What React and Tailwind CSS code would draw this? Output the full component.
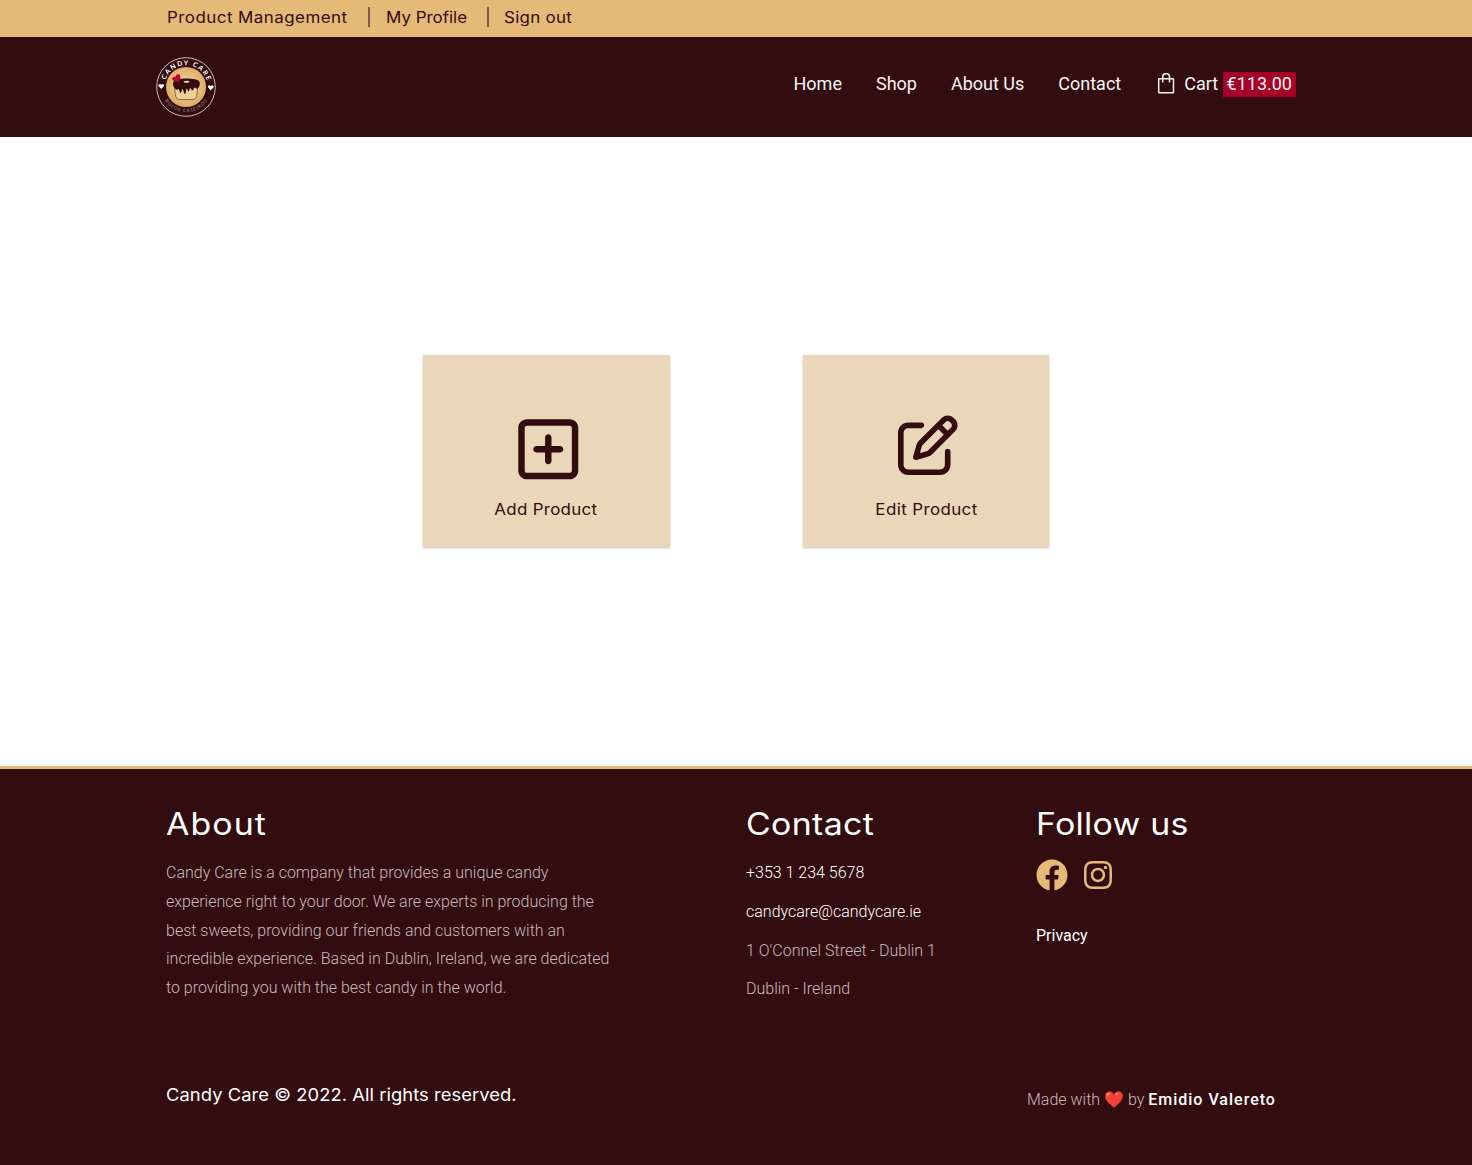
import { FaRegSquarePlus, FaRegPenToSquare } from "react-icons/fa6";
import { FaFacebook, FaInstagram } from "react-icons/fa";

function Logo() {
  return (
    <svg viewBox="0 0 60 60" className="size-[60px] shrink-0" role="img" aria-label="Candy Care">
      <defs>
        <path id="arc-top" d="M8.200 30a21.800 21.800 0 0 1 43.600 0" />
        <path id="arc-bottom" d="M4.800 30a25.200 25.200 0 0 0 50.400 0" />
        <radialGradient id="disc">
          <stop offset="0.3" stopColor="#ecd09a" />
          <stop offset="1" stopColor="#e0ac66" />
        </radialGradient>
      </defs>
      <circle cx="30" cy="30" r="29.300" fill="none" stroke="#c9bcbc" strokeWidth="1" />
      <circle cx="30" cy="30" r="20" fill="url(#disc)" />
      <text fill="#fff" fontSize="6.700" fontWeight="700" letterSpacing="1.400" textAnchor="middle" className="font-['Lato',sans-serif]">
        <textPath href="#arc-top" startOffset="51.500%">CANDY CARE</textPath>
      </text>
      <text fill="#a8938f" fontSize="4.600" letterSpacing="0.9" textAnchor="middle" className="font-['Lato',sans-serif]">
        <textPath href="#arc-bottom" startOffset="50.500%">BOLOS CASEIROS</textPath>
      </text>
      <path d="M5.200 32 2.600 29.300c-1.100-1.900 1.500-3.400 2.600-1.400 1.100-2 3.700-.5 2.600 1.400Z" fill="#fff" />
      <path d="m54.800 33.300-2.600-2.700c-1.100-1.900 1.500-3.400 2.600-1.400 1.100-2 3.700-.5 2.600 1.400Z" fill="#fff" />
      <path d="M18.700 31c.3 7 .8 11.600 5.300 11.600h12.500c4.300 0 4.700-5 5-11.600" fill="#edcf98" stroke="#6d4a35" strokeWidth="0.8" />
      <path d="M17 26c1-3.500 7-4.500 13-4.500s13.500.8 13.800 4c.2 3-.8 5-2 6-1.300 1-2.300-1.500-3.300-1-1 .5-.9 3-2.100 3-1.300 0-1-2.500-2-2.500s-.8 3.500-1.800 3.500-1-3-1.700-3c-.9 0-.8 5.500-2 5.500s-1.500-5-2.500-5c-.8 0-.7 4-1.800 4s-1.200-4-2.200-4-1.500 1.500-2.500.5C18.500 31 16.500 28.500 17 26Z" fill="#330c10" />
      <ellipse cx="30.500" cy="24.800" rx="3" ry="1.100" fill="#edcf98" />
      <path d="M22.800 24.800c-2.500.3-5.500-.6-6.400-2.400-.9-2 1.300-3.400 3.200-2.100-.2-3.300 3.900-4.300 4.600-1 .4 2-.4 4-1.400 5.500Z" fill="#c2002b" />
    </svg>
  );
}

function BagIcon() {
  return (
    <svg viewBox="0 0 18 22" className="relative -top-0.5 -left-px h-[22px] w-[18px]" fill="none" stroke="#f8f3f3" strokeWidth="1.500">
      <rect x="1.700" y="6.700" width="14.800" height="14" rx="0.5" />
      <path d="M5.700 10.500V4.600A3 3 0 0 1 8.700 1.700h.8a3 3 0 0 1 3 2.900v5.900" />
    </svg>
  );
}

function ProductCard({ children, label, className }) {
  return (
    <a href="#" className={`flex h-48 flex-col items-center bg-[#ead7b9] text-[#330c10] shadow-[0_1px_2px_rgba(0,0,0,0.25)] ${className}`}>
      {children}
      {label}
    </a>
  );
}

function Heading({ children, className }) {
  return (
    <h2 className={`w-max origin-left scale-x-110 font-['Inter',sans-serif] text-[30.800px] leading-[47px] mb-0.5 font-[430] text-white ${className}`}>
      {children}
    </h2>
  );
}

export default function App() {
  return (
    <div className="flex h-[1165px] flex-col bg-white font-['Roboto',sans-serif]">
      <div className="flex h-[37px] bg-[#e5b978] pl-[167px] font-['Inter',sans-serif] text-[15.400px] leading-[35px] font-[430] whitespace-nowrap text-[#330c10]">
        <a href="#" className="w-[201px]">
          <span className="inline-block origin-left scale-x-110 tracking-[0.420px]">Product Management</span>
        </a>
        <span className="mt-[7px] h-5 w-0.5 bg-[#82594b]" />
        <a href="#" className="w-[117px] pl-4">
          <span className="inline-block origin-left scale-x-110">My Profile</span>
        </a>
        <span className="mt-[7px] h-5 w-0.5 bg-[#82594b]" />
        <a href="#" className="pl-[15px]">
          <span className="inline-block origin-left scale-x-110 tracking-[0.250px]">Sign out</span>
        </a>
      </div>

      <header className="flex h-[100px] items-center justify-between bg-[#330c10] pr-44 pl-[156px]">
        <Logo />
        <nav className="mb-[5px] flex items-center gap-[34px] text-lg leading-[25px] text-[#f8f3f3]">
          <a href="#" className="-mt-0.5">Home</a>
          <a href="#" className="-mt-0.5">Shop</a>
          <a href="#" className="-mt-0.5">About Us</a>
          <a href="#" className="-mt-0.5">Contact</a>
          <a href="#" className="ml-[3px] flex items-center">
            <BagIcon />
            <span className="-mt-0.5 ml-2">Cart</span>
            <span className="ml-[4.400px] bg-[#a50028] px-1 pb-px leading-6">€113.00</span>
          </a>
        </nav>
      </header>

      <main className="flex flex-1 items-start gap-[133px] pt-[218px] pl-[423px] font-['Inter',sans-serif] text-[15.400px] leading-6 font-[430]">
        <ProductCard
          className="w-[247px]"
          label={<span className="mt-[14.430px] mr-px scale-x-110 tracking-[0.270px]">Add Product</span>}
        >
          <FaRegSquarePlus className="mt-[60px] ml-[3px] size-[68.570px]" />
        </ProductCard>
        <ProductCard
          className="w-[246px]"
          label={<span className="mt-[23px] scale-x-110 tracking-[0.350px]">Edit Product</span>}
        >
          <FaRegPenToSquare className="mt-[60px] ml-[3px] size-[60px]" />
        </ProductCard>
      </main>

      <footer className="h-[399px] border-t-[3px] border-[#e5b978] bg-[#330c10] pt-[31px] pl-[166px] text-base font-light text-[#c6bbbb]">
        <div className="flex h-[277px]">
          <section className="w-[580px]">
            <Heading className="tracking-[1px]">About</Heading>
            <p className="mt-3 w-[450px] leading-[28.800px]">
              Candy Care is a company that provides a unique candy experience right to your door. We are experts in producing the best sweets, providing our friends and customers with an incredible experience. Based in Dublin, Ireland, we are dedicated to providing you with the best candy in the world.
            </p>
          </section>
          <section className="w-[290px]">
            <Heading className="tracking-[0.300px]">Contact</Heading>
            <div className="mt-3 flex flex-col gap-2.5 leading-[28.800px]">
              <a href="#" className="text-white">+353 1 234 5678</a>
              <a href="#" className="text-white">candycare@candycare.ie</a>
              <p>1 O'Connel Street - Dublin 1</p>
              <p className="-mt-[0.600px]">Dublin - Ireland</p>
            </div>
          </section>
          <section>
            <Heading className="tracking-[0.250px]">Follow us</Heading>
            <div className="mt-3 flex h-8 items-center gap-4 text-[#e5b978]">
              <FaFacebook className="size-8" />
              <FaInstagram viewBox="0 0 448 512" className="h-8 w-7" />
            </div>
            <a href="#" className="mt-[31px] block leading-[28.800px] font-normal text-white">Privacy</a>
          </section>
        </div>
        <div className="flex">
          <div className="mt-1 w-[861px] text-white">
            <p className="w-max origin-left scale-x-106 font-['Inter',sans-serif] text-[17.330px] leading-[27px] font-[430] tracking-[0.050px]">
              Candy Care © 2022. All rights reserved.
            </p>
          </div>
          <p className="mt-2 leading-[29px]">
            Made with ❤️ by <a href="#" className="font-medium tracking-[1px] text-white">Emidio Valereto</a>
          </p>
        </div>
      </footer>
    </div>
  );
}
